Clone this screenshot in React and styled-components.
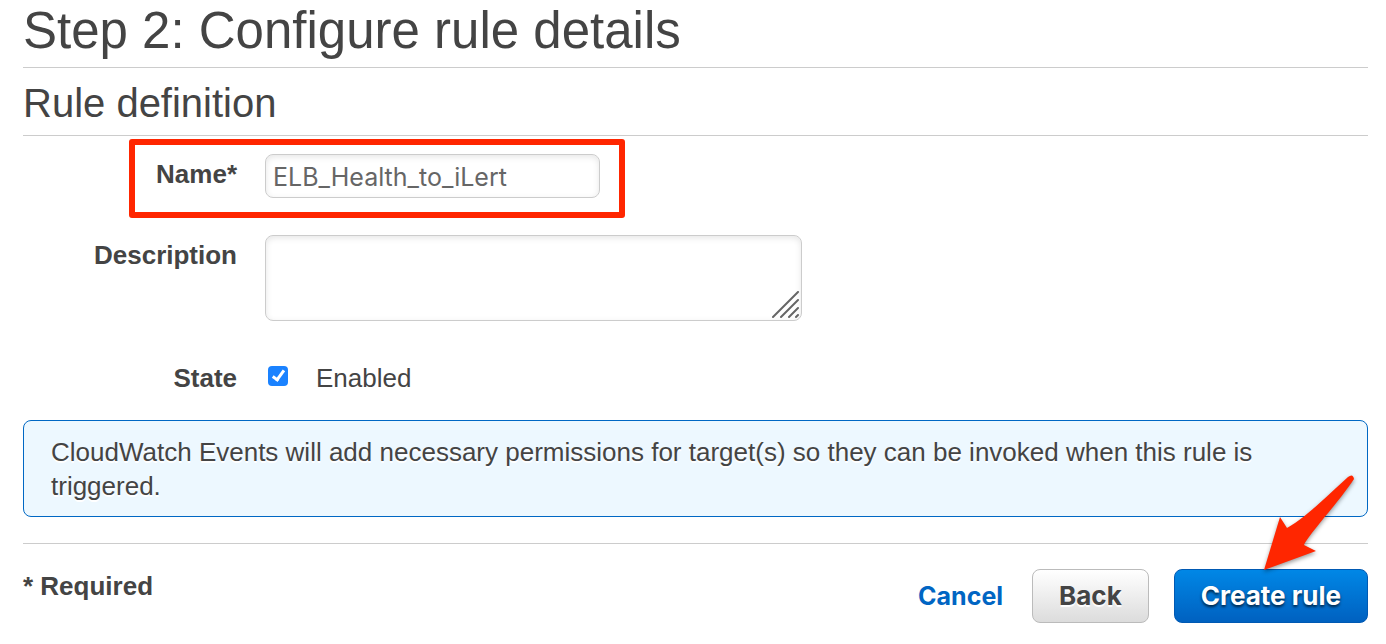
import React from 'react';
import styled, { createGlobalStyle, css } from 'styled-components';

const GlobalStyle = createGlobalStyle`
  *, *::before, *::after { box-sizing: border-box; }
  body {
    margin: 0;
    background: #fff;
    color: #444;
    font: 26px/34px "Liberation Sans", Arial, sans-serif;
  }
`;

const Page = styled.main`
  padding: 0 18px 20px 23px;
`;

const Title = styled.h1`
  margin: 0;
  height: 68px;
  border-bottom: 1px solid #ccc;
  font-size: 51px;
  line-height: 62px;
  font-weight: 400;
`;

const SectionTitle = styled.h2`
  margin: 0;
  height: 68px;
  border-bottom: 1px solid #ccc;
  font-size: 40px;
  line-height: 70px;
  font-weight: 400;
`;

const Form = styled.form`
  margin: 0;
`;

const Row = styled.div`
  display: grid;
  grid-template-columns: 214px 1fr;
  column-gap: 28px;
  align-items: start;
  padding-top: ${({ $top }) => $top}px;
`;

const Label = styled.label`
  padding-top: 3px;
  font-weight: 700;
  text-align: right;
`;

const field = css`
  display: block;
  border: 1px solid #ccc;
  border-radius: 8px;
  background: #fff;
  color: #666;
  font-family: Inter, sans-serif;
  font-size: 25px;
  box-shadow: inset 0 2px 6px rgba(0, 0, 0, 0.1);
  outline: 0;
`;

const TextInput = styled.input`
  ${field}
  width: 335px;
  height: 44px;
  padding: 2px 7px 1px;
`;

const Highlight = styled.div`
  position: relative;

  &::after {
    content: "";
    position: absolute;
    top: 3px;
    left: 106px;
    width: 496px;
    height: 79px;
    border: 6px solid #ff2600;
    border-radius: 3px;
    pointer-events: none;
  }
`;

const AreaWrap = styled.div`
  position: relative;
  width: 537px;
`;

const TextArea = styled.textarea`
  ${field}
  width: 100%;
  height: 86px;
  padding: 8px;
  resize: none;
`;

const Grip = styled.svg`
  position: absolute;
  right: 2px;
  bottom: 2px;
  pointer-events: none;
`;

const CheckLine = styled.label`
  display: flex;
  align-items: center;
  gap: 28px;
  padding: 3px 0 0 3px;
`;

const CheckBox = styled.input`
  appearance: none;
  width: 20px;
  height: 20px;
  margin: 0 0 4px;
  border-radius: 4px;
  background: #1a82ff;
  display: grid;
  place-items: center;

  &::before {
    content: "";
    width: 7px;
    height: 13px;
    margin-bottom: 3px;
    border: solid #fff;
    border-width: 0 3px 3px 0;
    transform: rotate(36deg);
    visibility: hidden;
  }
  &:checked::before { visibility: visible; }
`;

const Notice = styled.p`
  margin: 25px 0 26px;
  padding: 14px 90px 13px 27px;
  border: 1px solid #0068c4;
  border-radius: 8px;
  background: #edf8ff;
  text-shadow: 0 2px 0 #fff;
`;

const Footer = styled.footer`
  display: flex;
  align-items: flex-start;
  justify-content: space-between;
  padding-top: 25px;
  border-top: 1px solid #ccc;
`;

const Required = styled.strong`
  font-weight: 700;
`;

const Actions = styled.div`
  display: flex;
  align-items: center;
  gap: 25px;
  font-family: Inter, sans-serif;
`;

const CancelLink = styled.a`
  margin-right: 4px;
  color: #0065c3;
  font-size: 25px;
  font-weight: 700;
  text-decoration: none;
`;

const Button = styled.button`
  height: 54px;
  padding: 0 26px;
  border: 1px solid ${({ $primary }) => ($primary ? '#0059b3' : '#bbb')};
  border-radius: 8px;
  background: ${({ $primary }) =>
    $primary ? 'linear-gradient(#0087e6, #0061c0)' : 'linear-gradient(#fff, #dcdcdc)'};
  color: ${({ $primary }) => ($primary ? '#fff' : '#444')};
  font: inherit;
  font-weight: 700;
  text-shadow: ${({ $primary }) => ($primary ? '0 2px 3px rgba(0,0,0,.7)' : '0 2px 1px #fff')};
`;

const Target = styled.div`
  position: relative;
  display: flex;
`;

const Arrow = styled.svg`
  position: absolute;
  right: 8px;
  bottom: 49px;
  filter: drop-shadow(0 2px 2px rgba(0, 0, 0, 0.4));
  pointer-events: none;
`;

export default function App() {
  return (
    <Page>
      <GlobalStyle />
      <Title>Step 2: Configure rule details</Title>
      <SectionTitle>Rule definition</SectionTitle>
      <Form>
        <Highlight>
          <Row $top={18}>
            <Label htmlFor="name">Name*</Label>
            <TextInput id="name" type="text" defaultValue="ELB_Health_to_iLert" spellCheck={false} />
          </Row>
        </Highlight>
        <Row $top={37}>
          <Label htmlFor="description">Description</Label>
          <AreaWrap>
            <TextArea id="description" />
            <Grip width="28" height="28" viewBox="0 0 28 28" aria-hidden="true">
              <path d="M1 26 26 1M9 26 26 9M17 26 26 17M24 26 26 24" stroke="#666" strokeWidth="2" strokeLinecap="round" />
            </Grip>
          </AreaWrap>
        </Row>
        <Row $top={37}>
          <Label htmlFor="state">State</Label>
          <CheckLine>
            <CheckBox id="state" type="checkbox" defaultChecked />
            Enabled
          </CheckLine>
        </Row>
        <Notice>
          CloudWatch Events will add necessary permissions for target(s) so they can be invoked when
          this rule is triggered.
        </Notice>
        <Footer>
          <Required>* Required</Required>
          <Actions>
            <CancelLink href="#">Cancel</CancelLink>
            <Button type="button">Back</Button>
            <Target>
              <Button type="button" $primary>Create rule</Button>
              <Arrow width="100" height="100" viewBox="0 0 100 100" aria-hidden="true">
                <path
                  d="M4 96 20 43 27 54C44 45 66 23 88 3Q93 -1 94 5C79 28 48 61 44 71L56 77Z"
                  fill="#ff2600"
                />
              </Arrow>
            </Target>
          </Actions>
        </Footer>
      </Form>
    </Page>
  );
}
